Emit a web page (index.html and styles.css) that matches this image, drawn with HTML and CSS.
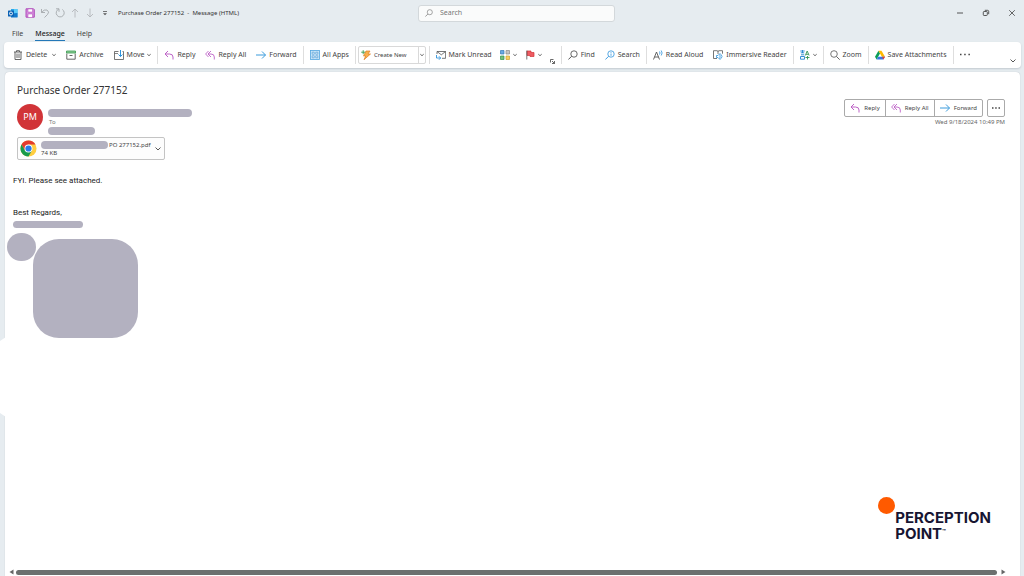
FILE: index.html
```html
<!DOCTYPE html>
<html lang="en">
<head>
<meta charset="utf-8">
<title>Purchase Order 277152 - Message (HTML)</title>
<link rel="stylesheet" href="styles.css">
</head>
<body>
<svg class="defs" aria-hidden="true">
  <symbol id="reply" viewBox="0 0 10 10"><path d="M4 1 1 4l3 3M1 4h4.500q3.500 0 3.500 3v2.500" fill="none" stroke="#bd62c6"/></symbol>
  <symbol id="replyall" viewBox="0 0 10 10"><path d="M3.500 1 .6 4l2.900 3M6 1 3 4l3 3M3 4h3q3.300 0 3.300 3v2.500" fill="none" stroke="#bd62c6" stroke-width=".9"/></symbol>
  <symbol id="forward" viewBox="0 0 10 10"><path d="M0 5h9.500M6 1.500 9.500 5 6 8.500" fill="none" stroke="#3a9bdc"/></symbol>
  <symbol id="chev" viewBox="0 0 4 4"><path d="m.3 1.200 1.700 1.500 1.700-1.500" fill="none" stroke="#444" stroke-width=".8"/></symbol>
  <symbol id="lens" viewBox="0 0 10 10"><circle cx="6" cy="4" r="3.200" fill="none" stroke="currentColor" stroke-width=".8"/><path d="M3.600 6.300.4 9.500" stroke="currentColor" stroke-width=".9"/></symbol>
</svg>

<header class="titlebar">
  <div class="quick">
    <svg class="icon app" viewBox="0 0 10 10"><path d="M3 1h6.500v8H3z" fill="#2aa7ea"/><path d="M6 1h3.500v4H6z" fill="#59c9f7"/><path d="M3 6l6.500-1v4.500H3z" fill="#1479cc"/><rect y="2.500" width="6" height="6" rx=".6" fill="#0b62b5"/><circle cx="3" cy="5.500" r="1.500" fill="none" stroke="#fff" stroke-width=".9"/></svg>
    <button class="bare" aria-label="Save"><svg class="icon" viewBox="0 0 10 10"><path d="M1 .8h7.500l.8.800v7.600H1z" fill="#d48bdc" stroke="#b04fbb"/><path d="M3 1h4.500v3H3zM3 6h4.500v3.500H3z" fill="#fff" stroke="#b04fbb" stroke-width=".5"/></svg></button>
    <button class="bare" aria-label="Undo"><svg class="icon" viewBox="0 0 10 10"><path d="M1.500 1v3.500H5M1.500 4.500Q4 1 7 2q3 2 .5 4.500L4.500 9.500" fill="none" stroke="#a4a8ab" stroke-width=".9"/></svg></button>
    <button class="bare" aria-label="Redo"><svg class="icon" viewBox="0 0 10 10"><path d="M1 .8h3v3M3.700 1.200a4 4 0 1 0 3.600.3" fill="none" stroke="#a4a8ab" stroke-width=".9"/></svg></button>
    <button class="bare" aria-label="Previous item"><svg class="icon" viewBox="0 0 10 10"><path d="M5 9.500V1M2 4l3-3 3 3" fill="none" stroke="#b4b8bb" stroke-width=".9"/></svg></button>
    <button class="bare" aria-label="Next item"><svg class="icon" viewBox="0 0 10 10"><path d="M5 .5V9M2 6l3 3 3-3" fill="none" stroke="#b4b8bb" stroke-width=".9"/></svg></button>
    <button class="bare" aria-label="Customize toolbar"><svg class="icon" viewBox="0 0 10 10"><path d="M3 3.500h4" stroke="#555" stroke-width=".8"/><path d="M3 5.300h4L5 7.200z" fill="#555"/></svg></button>
    <span class="window-title">Purchase Order 277152&nbsp; -&nbsp; Message (HTML)</span>
  </div>
  <label class="search"><svg><use href="#lens"/></svg><input type="text" placeholder="Search" aria-label="Search"></label>
  <div class="window-controls">
    <button class="bare" aria-label="Minimize"><svg class="icon" viewBox="0 0 10 10"><path d="M2 5h6" stroke="#444" stroke-width=".9"/></svg></button>
    <button class="bare" aria-label="Restore"><svg class="icon" viewBox="0 0 10 10"><rect x="2.300" y="3.500" width="4" height="4" rx=".8" fill="none" stroke="#444" stroke-width=".9"/><path d="M3.800 2.300h2.700q1.200 0 1.200 1.200v2.700" fill="none" stroke="#444" stroke-width=".9"/></svg></button>
    <button class="bare" aria-label="Close"><svg class="icon" viewBox="0 0 10 10"><path d="m2.200 2.200 5.600 5.600m0-5.600L2.200 7.800" stroke="#444" stroke-width=".8"/></svg></button>
  </div>
</header>

<nav class="tabs">
  <button class="tab">File</button>
  <button class="tab active">Message</button>
  <button class="tab">Help</button>
</nav>

<div class="ribbon" role="toolbar" aria-label="Message">
  <div class="group">
    <button class="cmd"><svg class="icon" viewBox="0 0 10 10"><path d="M1 2h8M3.500 2V.7h3V2M2 2v7.500h6V2M4 3.500V8M6 3.500V8" fill="none" stroke="#555" stroke-width=".9"/></svg>Delete<svg class="chev wide"><use href="#chev"/></svg></button>
    <button class="cmd"><svg class="icon" viewBox="0 0 10 10"><path d="M.8 3.500v5.700h8.400V3.500M3.500 5.500h3" fill="none" stroke="#555" stroke-width=".9"/><path d="M.5 1h9v2h-9z" fill="#8fce9b" stroke="#379a4c" stroke-width=".8"/></svg>Archive</button>
    <button class="cmd"><svg class="icon" viewBox="0 0 10 10"><path d="M4.500 1.500H.5v8h9v-8H8.500" fill="none" stroke="#555" stroke-width=".8"/><path d="M.5 3.500H4" stroke="#555" stroke-width=".7"/><path d="M6.500 0v6.500M4.500 4.500l2 2 2-2" fill="none" stroke="#2f93dc"/></svg>Move<svg class="chev"><use href="#chev"/></svg></button>
  </div>
  <div class="group">
    <button class="cmd"><svg class="icon"><use href="#reply"/></svg>Reply</button>
    <button class="cmd"><svg class="icon"><use href="#replyall"/></svg>Reply All</button>
    <button class="cmd"><svg class="icon"><use href="#forward"/></svg>Forward</button>
  </div>
  <div class="group">
    <button class="cmd"><svg class="icon" viewBox="0 0 10 10"><rect x=".5" y=".5" width="9" height="9" fill="#c9e5f8" stroke="#51a5df" stroke-width=".8"/><path d="M2.200 2.200h2v2h-2zM5.800 2.200h2v2h-2zM2.200 5.800h2v2h-2zM5.800 5.800h2v2h-2z" fill="#fff" stroke="#4c9ad6" stroke-width=".7"/></svg>All Apps</button>
  </div>
  <div class="group snug">
    <div class="split">
      <button class="cmd"><svg class="icon" viewBox="0 0 10 10"><path d="M5 1h4L7 4h2.500L3 9.700 4.700 6H2.500z" fill="#f8b04c" stroke="#df7e22" stroke-width=".7"/><path d="M2.200.2v4M.2 2.200h4" stroke="#3a9b50" stroke-width=".9"/></svg>Create New</button>
      <button class="drop" aria-label="More create options"><svg class="chev"><use href="#chev"/></svg></button>
    </div>
  </div>
  <div class="group tags">
    <button class="cmd"><svg class="icon" viewBox="0 0 10 10"><path d="M1 4V1.500h8.600v6.800H6M1 1.500l4.300 3.300 4.300-3.300" fill="none" stroke="#555" stroke-width=".8"/><path d="M.5 5v3h4M3 6.300 4.700 8 3 9.700" fill="none" stroke="#2f93dc" stroke-width=".9"/></svg>Mark Unread</button>
    <button class="cmd mini" aria-label="Categorize"><svg class="icon" viewBox="0 0 10 10"><path d="M.5.500h3.500v3.500h-3.500z" fill="#69a9e2" stroke="#3478b8" stroke-width=".7"/><path d="M6 .5h3.500v3.500H6z" fill="#c4c4c4" stroke="#888" stroke-width=".7"/><path d="M.5 6h3.500v3.500h-3.500z" fill="#73bd7d" stroke="#34924a" stroke-width=".7"/><path d="M6 6h3.500v3.500H6z" fill="#f9cf60" stroke="#d0a02c" stroke-width=".7"/></svg><svg class="chev"><use href="#chev"/></svg></button>
    <button class="cmd mini" aria-label="Follow up"><svg class="icon" viewBox="0 0 10 10"><path d="M2 1h4v1.500h3v4H5V5.500H2z" fill="#ee5b62" stroke="#d13438" stroke-width=".7"/><path d="M1.800.5v9" stroke="#555" stroke-width=".8"/></svg><svg class="chev"><use href="#chev"/></svg></button>
    <button class="bare launcher" aria-label="Tag options"><svg viewBox="0 0 5 5"><path d="M.5 3.500v-3h3M2 2l2.500 2.500M4.500 2v2.500H2" fill="none" stroke="#444" stroke-width=".8"/></svg></button>
  </div>
  <div class="group">
    <button class="cmd"><svg class="icon"><use href="#lens"/></svg>Find</button>
    <button class="cmd"><svg class="icon blue"><use href="#lens"/><path d="M6 3.500v2.300M6 2v.8" stroke="#2f93dc" stroke-width=".8"/></svg>Search</button>
  </div>
  <div class="group">
    <button class="cmd"><svg class="icon" viewBox="0 0 10 10"><path d="M.5 9.500 3.500 2l3 7.500M1.500 7h4" fill="none" stroke="#555" stroke-width=".9"/><path d="M6.500 1.500q1 1.500 0 3M8.200.500q1.800 2.500 0 5" fill="none" stroke="#2f93dc" stroke-width=".8"/></svg>Read Aloud</button>
    <button class="cmd"><svg class="icon" viewBox="0 0 10 10"><path d="M4 8.500H.5V.700H4q1 0 1 1 0-1 1-1h3.500v3M5 1.700V4" fill="none" stroke="#555" stroke-width=".8"/><path d="M3.500 5.500H5l2-2v6l-2-2H3.500zM8.200 4.500q1.600 2 0 4" fill="#fff" stroke="#2f93dc" stroke-width=".8"/></svg>Immersive Reader</button>
  </div>
  <div class="group">
    <button class="cmd mini" aria-label="Translate"><svg class="icon" viewBox="0 0 10 10"><path d="M.3 1h4.400M.8 2.800h3.400M2.500 0v3M1 4.800h3.200M.5 6.500h4v2.700h-4z" fill="none" stroke="#2384cf" stroke-width=".9"/><path d="m5.300 5.500 1.900-4.500 1.900 4.500M6 4.300h2.400M5.500 7.500h4M7.500 6v3.500" fill="none" stroke="#349451" stroke-width=".9"/></svg><svg class="chev"><use href="#chev"/></svg></button>
  </div>
  <div class="group">
    <button class="cmd"><svg class="icon" viewBox="0 0 10 10"><circle cx="4" cy="4" r="3.300" fill="none" stroke="#555" stroke-width=".8"/><path d="m6.500 6.500 3.200 3.200" stroke="#555" stroke-width=".9"/></svg>Zoom</button>
  </div>
  <div class="group">
    <button class="cmd"><svg class="icon" viewBox="0 0 10 10"><path d="M3.500.8 0 6.800l1.600 2.600L5 3.500z" fill="#0b9d58"/><path d="M3.500.8h3L10 6.800H6.900z" fill="#ffba00"/><path d="M3.200 6.800H10L8.400 9.400H1.600z" fill="#3777e3"/><path d="M7 6.800h3L8.400 9.400z" fill="#e94335"/></svg>Save Attachments</button>
  </div>
  <div class="group">
    <button class="cmd" aria-label="More commands"><svg class="icon" viewBox="0 0 10 10"><path d="M0 4.500h1.500M4.200 4.500h1.500M8.400 4.500h1.500" stroke="#444" stroke-width="1.400"/></svg></button>
  </div>
  <button class="bare collapse" aria-label="Collapse ribbon"><svg viewBox="0 0 6 4"><path d="m.5.500 2.500 2.500L5.500.5" fill="none" stroke="#444" stroke-width=".9"/></svg></button>
</div>

<main class="message">
  <h1 class="subject">Purchase Order 277152</h1>
  <div class="head">
    <div class="avatar">PM</div>
    <div class="people">
      <span class="redact from"></span>
      <span class="to">To</span>
      <span class="redact recipient"></span>
    </div>
    <div class="side">
      <div class="actions">
        <div class="joined">
          <button><svg class="icon"><use href="#reply"/></svg>Reply</button>
          <button><svg class="icon"><use href="#replyall"/></svg>Reply All</button>
          <button><svg class="icon"><use href="#forward"/></svg>Forward</button>
        </div>
        <button class="more" aria-label="More actions"><svg class="icon" viewBox="0 0 10 10"><path d="M1 5h1.500M4.200 5h1.500M7.500 5H9" stroke="#444" stroke-width="1.300"/></svg></button>
      </div>
      <time class="date">Wed 9/18/2024 10:49 PM</time>
    </div>
  </div>
  <button class="attachment">
    <svg class="chrome" viewBox="0 0 18 18"><circle cx="9" cy="9" r="8.500" fill="#ffcd40"/><path d="M1.600 4.800A8.500 8.500 0 0 1 16.400 4.800H9L5.300 11z" fill="#e33b2e"/><path d="M1.600 4.800A8.500 8.500 0 0 0 9 17.500l3.700-6.300H5.300z" fill="#189b4c"/><circle cx="9" cy="9" r="4.200" fill="#fff"/><circle cx="9" cy="9" r="3.300" fill="#287bea"/></svg>
    <span class="file"><span class="name"><span class="redact hidden-name"></span>PO 277152.pdf</span><span>74 KB</span></span>
    <svg class="down" viewBox="0 0 6 4"><path d="m.5.500 2.500 2.500L5.500.5" fill="none" stroke="#444" stroke-width=".9"/></svg>
  </button>
  <div class="body">
    <p>FYI. Please see attached.</p>
    <p class="regards">Best Regards,</p>
    <span class="redact signature"></span>
    <div class="pictures"><span class="redact small-pic"></span><span class="redact big-pic"></span></div>
  </div>
  <div class="brand"><span class="dot"></span><div class="wordmark"><div>PERCEPTION</div><div class="second">POINT<span class="tm">™</span></div></div></div>
  <div class="scroll"><svg viewBox="0 0 5 6"><path d="M4.500.500v5L.5 3z" fill="#666"/></svg><span class="thumb"></span><svg viewBox="0 0 5 6"><path d="M.5.500v5l4-2.500z" fill="#666"/></svg></div>
  <span class="notch"></span>
</main>
</body>
</html>
```
FILE: styles.css
```css
* { box-sizing: border-box; }
body {
  margin: 0;
  min-height: 100vh;
  display: flex;
  flex-direction: column;
  background: #e6ecf0;
  color: #444;
  font: 7px/10px "Noto Sans", "Open Sans", sans-serif;
}
button, input { font: inherit; color: inherit; }
button { background: none; border: 0; padding: 0; margin: 0; white-space: nowrap; }
svg { display: block; flex: none; }
.defs { position: absolute; width: 0; height: 0; }
.icon { width: 10px; height: 10px; }
.chev { width: 4px; height: 4px; }
.redact { display: block; background: #b3b1c0; border-radius: 4px; }

.titlebar {
  display: grid;
  grid-template-columns: 1.02fr 197px 1fr;
  align-items: center;
  height: 26px;
  padding: 0 7px 0 8px;
}
.quick { display: flex; align-items: center; gap: 5px; font-size: 6px; white-space: nowrap; }
.app { margin-right: 2px; }
.window-title { margin-left: 3px; color: #333; }
.search {
  display: flex;
  align-items: center;
  gap: 7px;
  height: 17px;
  padding: 0 6px;
  background: #fafbfb;
  border: 1px solid #d3d8db;
  border-radius: 3px;
  color: #777;
}
.search svg { width: 8px; height: 8px; }
.search input { flex: 1; min-width: 0; border: 0; padding: 0; background: none; outline: 0; }
.search input::placeholder { color: #777; opacity: 1; }
.window-controls { display: flex; justify-content: flex-end; gap: 16px; }

.tabs { display: flex; align-items: center; gap: 12px; height: 16px; padding: 0 12px; }
.tab { height: 13px; border-bottom: 1px solid transparent; }
.tab.active { color: #222; font-weight: 500; border-color: #2478b8; }

.ribbon {
  display: flex;
  align-items: center;
  height: 26px;
  margin: 0 3px 0 4px;
  padding-left: 3px;
  background: #fff;
  border-radius: 4px;
  box-shadow: 0 1px 2px #c3cad0;
}
.group { display: flex; align-items: center; gap: 10px; height: 18px; padding: 0 6px; }
.group + .group { border-left: 1px solid #dedede; }
.group.snug { padding: 0 3px 0 2px; }
.group.tags { gap: 8px; }
.cmd { display: flex; align-items: center; gap: 3px; }
.cmd .wide { margin-left: 2px; }
.blue { color: #2f93dc; }
.split { display: flex; height: 18px; border: 1px solid #d9d9d9; border-radius: 2px; font-size: 6px; }
.split .cmd { padding: 0 11px 0 2px; }
.drop { padding: 0 1px; border-left: 1px solid #d9d9d9; }
.launcher { align-self: flex-end; }
.launcher svg { width: 5px; height: 5px; }
.collapse { align-self: flex-end; margin-left: auto; padding: 0 5px 5px; }
.collapse svg { width: 6px; height: 4px; }

.message {
  position: relative;
  flex: 1;
  display: flex;
  flex-direction: column;
  margin: 4px 4px 0 5px;
  background: #fff;
  border-radius: 4px 4px 0 0;
  box-shadow: 0 0 1px #aab2b9;
}
.subject { margin: 11px 12px 0; font-size: 10px; line-height: 15px; font-weight: 400; color: #333; }
.head { display: flex; margin: 1px 15px 0 12px; }
.avatar {
  width: 26px;
  height: 26px;
  margin-top: 5px;
  border-radius: 50%;
  background: #d13438;
  color: #fff;
  font-size: 9px;
  line-height: 26px;
  text-align: center;
}
.people { flex: 1; margin: 10px 0 0 5px; }
.to { display: block; padding-left: 1px; font-size: 6px; line-height: 10px; color: #777; }
.from { width: 144px; height: 8px; }
.recipient { width: 47px; height: 8px; }
.side { display: flex; flex-direction: column; align-items: flex-end; }
.actions { display: flex; gap: 4px; height: 18px; font-size: 6px; }
.joined { display: flex; border: 1px solid #aaa; border-radius: 2px; }
.joined button { display: flex; align-items: center; gap: 4px; padding: 0 5px; }
.joined button + button { border-left: 1px solid #aaa; }
.more { padding: 0 3px; border: 1px solid #aaa; border-radius: 2px; }
.date { font-size: 6px; line-height: 11px; color: #666; }
.attachment {
  display: flex;
  align-items: center;
  align-self: flex-start;
  gap: 4px;
  height: 23px;
  margin: 2px 0 0 12px;
  padding: 0 3px 0 2px;
  border: 1px solid #c4c4c4;
  border-radius: 2px;
  background: #fdfdfd;
  font-size: 6px;
  line-height: 8px;
  text-align: left;
}
.chrome { width: 17px; height: 17px; }
.file > span { display: block; }
.file .name { display: flex; gap: 1px; align-items: center; }
.hidden-name { width: 67px; height: 8px; }
.down { width: 6px; height: 4px; }
.body { margin: 15px 8px 0; color: #222; font: 8px/12px Roboto, sans-serif; }
.body p { margin: 0; }
.body .regards { margin-top: 20px; }
.signature { width: 70px; height: 7px; margin-top: 2px; }
.pictures { display: flex; margin: 5px 0 0 -6px; }
.small-pic { width: 29px; height: 28px; border-radius: 14px; }
.big-pic { width: 105px; height: 99px; margin: 6px 0 0 -3px; border-radius: 26px; }
.brand { display: flex; align-self: flex-end; margin: auto 29px 26px 0; }
.dot { width: 17px; height: 17px; border-radius: 50%; background: #ff5a00; }
.wordmark { padding-top: 13px; color: #171532; font: 700 15px/16px Inter, sans-serif; }
.second { display: flex; align-items: flex-start; }
.tm { padding-top: 2px; font-size: 6px; line-height: 8px; }
.scroll { display: flex; align-items: center; gap: 2px; height: 8px; margin: 0 14px 0 4px; }
.scroll svg { width: 5px; height: 6px; }
.thumb { flex: 1; height: 5px; margin-right: 2px; border-radius: 3px; background: #6c706f; }
.notch {
  position: absolute;
  left: -5px;
  top: 265px;
  width: 6px;
  height: 80px;
  background: #fff;
  clip-path: polygon(0 4px, 100% 0, 100% 100%, 0 76px);
}
```
